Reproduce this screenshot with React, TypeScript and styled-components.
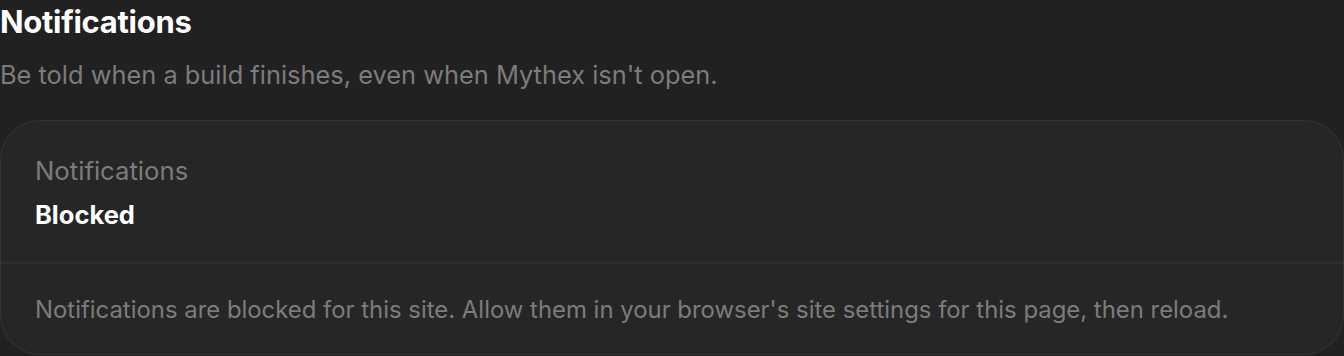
import React from "react";
import styled, { createGlobalStyle } from "styled-components";

const Global = createGlobalStyle`
  html, body { margin: 0; padding: 0; background: #212121; }
  body { font-family: Inter, "Liberation Sans", sans-serif; -webkit-font-smoothing: antialiased; }
`;

const Page = styled.div`
  display: flex;
  flex-direction: column;
  width: 1344px;
`;

const Title = styled.h2`
  margin: 0;
  height: 43px;
  display: flex;
  align-items: center;
  font-size: 31px;
  font-weight: 700;
  color: #ffffff;
  letter-spacing: -0.3px;
`;

const Subtitle = styled.p`
  margin: 15px 0 0;
  font-size: 25.4px;
  line-height: 34px;
  color: #7c7c7c;
`;

const Card = styled.section`
  margin-top: 28px;
  box-sizing: border-box;
  width: 1344px;
  background: #262626;
  border: 1px solid #353535;
  border-radius: 40px;
  overflow: hidden;
`;

const Status = styled.div`
  display: flex;
  flex-direction: column;
  gap: 13px;
  padding: 35px 34px 30px;
`;

const Label = styled.span`
  font-size: 25.7px;
  line-height: 30px;
  color: #7c7c7c;
`;

const Value = styled.span`
  font-size: 25.5px;
  line-height: 32px;
  font-weight: 700;
  color: #ffffff;
`;

const Note = styled.div`
  border-top: 3px solid #2e2e2e;
  padding: 29px 34px 27px;
  font-size: 23.9px;
  line-height: 34px;
  color: #7c7c7c;
`;

export default function App() {
  return (
    <>
      <Global />
      <Page>
        <Title>Notifications</Title>
        <Subtitle>Be told when a build finishes, even when Mythex isn't open.</Subtitle>
        <Card>
          <Status>
            <Label>Notifications</Label>
            <Value>Blocked</Value>
          </Status>
          <Note>
            Notifications are blocked for this site. Allow them in your browser's site settings for this page, then reload.
          </Note>
        </Card>
      </Page>
    </>
  );
}
